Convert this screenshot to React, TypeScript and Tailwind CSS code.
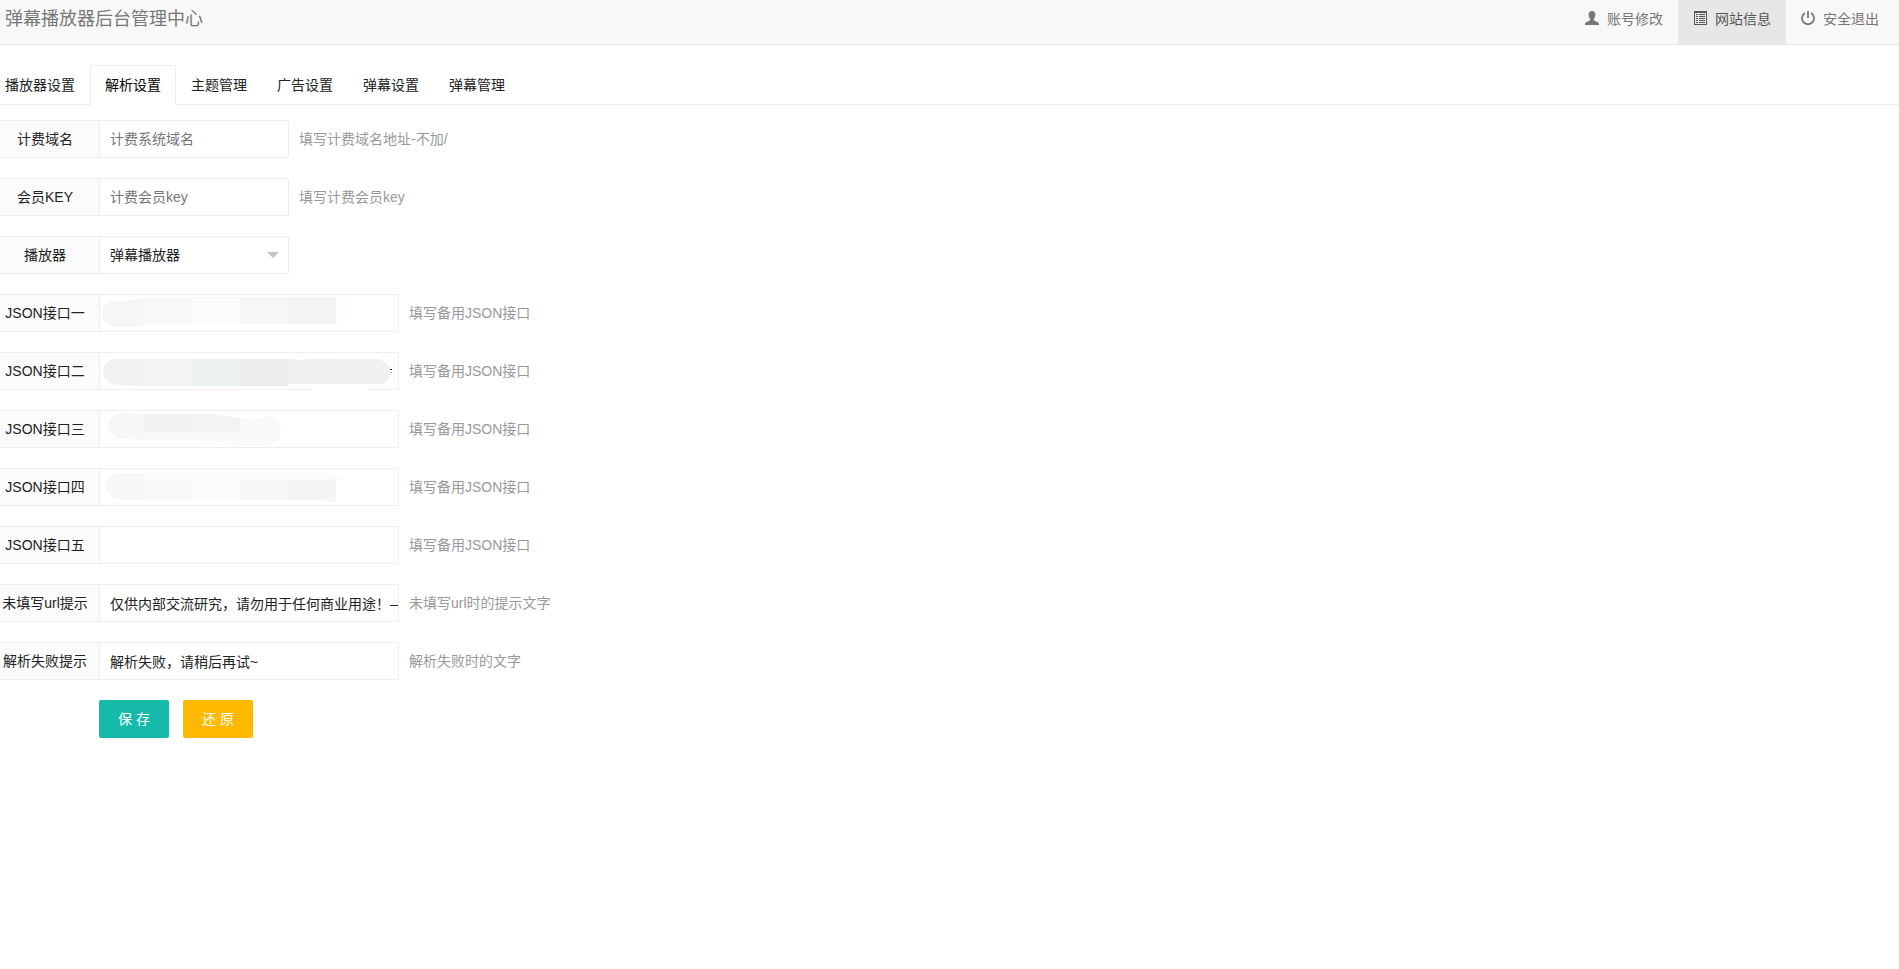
import { useState } from 'react'

type Smudge = { d: string; fill: string }[]

type Row = {
  id: string
  label: string
  hint?: string
  wide?: boolean
  placeholder?: string
  value?: string
  smudge?: Smudge
}

const navItems = [
  { id: 'account', label: '账号修改' },
  { id: 'site', label: '网站信息' },
  { id: 'logout', label: '安全退出' },
]

const tabs = ['播放器设置', '解析设置', '主题管理', '广告设置', '弹幕设置', '弹幕管理']

const topRows: Row[] = [
  { id: 'domain', label: '计费域名', placeholder: '计费系统域名', hint: '填写计费域名地址-不加/' },
  { id: 'key', label: '会员KEY', placeholder: '计费会员key', hint: '填写计费会员key' },
]

// masks over the private addresses, in the field's own 300x38 box
const smudges: Record<string, Smudge> = {
  json1: [
    { d: 'M17 7C8 7 3 13 3 20S8 33 20 33H34L45 31V4L34 6Z', fill: '#f7f5f6' },
    { d: 'M45 3H93V30H45Z', fill: '#f9f8f7' },
    { d: 'M93 3H141V30H93Z', fill: '#fbfbfb' },
    { d: 'M141 3H189V30H141Z', fill: '#f5f7f6' },
    { d: 'M189 3H237V30H189Z', fill: '#f4f4f4' },
    { d: 'M237 3C248 4 253 9 253 17S247 29 237 30Z', fill: '#fdfdfd' },
  ],
  json2: [
    { d: 'M45 7H18C9 7 4 13 4 20S10 32 18 33L45 34Z', fill: '#f3f2f1' },
    { d: 'M45 7H93V34H45Z', fill: '#f3f3f3' },
    { d: 'M93 7H141V34H93Z', fill: '#ebf0f1' },
    { d: 'M141 7H189V34H141Z', fill: '#ececee' },
    { d: 'M189 7H195V8H207V7H237V32H189Z', fill: '#efefee' },
    { d: 'M237 7H279C286 9 291 14 291 20S287 31 282 32H237Z', fill: '#f1eff0' },
    { d: 'M212 37H270V38H212Z', fill: '#fff' },
    { d: 'M291 17H293V18H291Z', fill: '#222' },
    { d: 'M292 20H293V21H292Z', fill: '#8fb8d8' },
  ],
  json3: [
    { d: 'M45 4L24 3C15 4 9 9 9 16S16 29 28 29L45 30Z', fill: '#f8f6f7' },
    { d: 'M45 4H93V22H45Z', fill: '#f3f1f2' },
    { d: 'M93 4H114L141 8V22H93Z', fill: '#f3f3f5' },
    { d: 'M45 22H141V8L150 9H156L168 7C177 8 182 13 182 20S176 35 165 36H145L120 32L100 30H45Z', fill: '#f9f9f9' },
  ],
  json4: [
    { d: 'M45 5H25C13 5 6 11 6 18S14 32 26 32H45Z', fill: '#f8f7f7' },
    { d: 'M45 5H228L248 12H45Z', fill: '#fafafa' },
    { d: 'M45 12H93V32H45Z', fill: '#f9f8f7' },
    { d: 'M93 12H141V32H93Z', fill: '#fcfcfc' },
    { d: 'M141 12H189V32H141Z', fill: '#f6f7f7' },
    { d: 'M189 12H237V34H228L225 32H189Z', fill: '#f5f5f5' },
  ],
}

const bottomRows: Row[] = [
  { id: 'json1', label: 'JSON接口一', hint: '填写备用JSON接口', wide: true, smudge: smudges.json1 },
  { id: 'json2', label: 'JSON接口二', hint: '填写备用JSON接口', wide: true, smudge: smudges.json2 },
  { id: 'json3', label: 'JSON接口三', hint: '填写备用JSON接口', wide: true, smudge: smudges.json3 },
  { id: 'json4', label: 'JSON接口四', hint: '填写备用JSON接口', wide: true, smudge: smudges.json4 },
  { id: 'json5', label: 'JSON接口五', hint: '填写备用JSON接口', wide: true },
  { id: 'empty', label: '未填写url提示', hint: '未填写url时的提示文字', wide: true, value: '仅供内部交流研究，请勿用于任何商业用途！——' },
  { id: 'fail', label: '解析失败提示', hint: '解析失败时的文字', wide: true, value: '解析失败，请稍后再试~' },
]

const labelClass = 'w-[110px] h-[38px] shrink-0 border border-[#eee] rounded-l-xs bg-[#fbfbfb] text-center leading-9 whitespace-nowrap'
const fieldClass = 'block w-full h-[38px] pl-[10px] border border-[#eee] rounded-r-xs bg-white text-[#222] outline-none placeholder:text-[#757575]'

function NavIcon({ id }: { id: string }) {
  if (id === 'account') {
    return (
      <svg width="14" height="14" viewBox="0 0 14 14" fill="currentColor" aria-hidden="true">
        <path d="M7 0C5 0 3.6 1.3 3.6 3.4c0 1.3.3 2.6.9 3.5.3.5.7.9.7 1.5 0 .9-.5 1.3-1.4 1.7L1.2 11.2C.4 11.6 0 12 0 13v1h14v-1c0-1-.4-1.4-1.2-1.8l-2.6-1.1c-.9-.4-1.4-.8-1.4-1.7 0-.6.4-1 .7-1.5.6-.9.9-2.2.9-3.5C10.4 1.3 9 0 7 0Z" />
      </svg>
    )
  }
  if (id === 'site') {
    return (
      <svg width="14" height="14" viewBox="0 0 14 14" fill="currentColor" aria-hidden="true">
        <path fillRule="evenodd" d="M1 0H14V14H1ZM2 2V13H13V2Z" />
        <path d="M3 3h2v1H3zM6 3h6v1H6zM3 5h2v1H3zM6 5h6v1H6zM3 7h2v1H3zM6 7h6v1H6zM3 9h2v1H3zM6 9h6v1H6zM3 11h2v1H3zM6 11h6v1H6z" />
      </svg>
    )
  }
  return (
    <svg width="14" height="14" viewBox="0 0 14 14" fill="none" stroke="currentColor" strokeWidth="1.8" aria-hidden="true">
      <path d="M4 2A6 6 0 1 0 10 2M7 0V7" />
    </svg>
  )
}

function FieldRow({ row }: { row: Row }) {
  return (
    <div className="flex items-start">
      <label htmlFor={row.id} className={labelClass}>{row.label}</label>
      <div className={`relative -ml-px shrink-0 ${row.wide ? 'w-[300px]' : 'w-[190px]'}`}>
        <input id={row.id} type="text" defaultValue={row.value} placeholder={row.placeholder} className={fieldClass} />
        {row.smudge && (
          <svg className="absolute inset-0 pointer-events-none" width="300" height="38" aria-hidden="true">
            {row.smudge.map((s) => <path key={s.d} d={s.d} fill={s.fill} />)}
          </svg>
        )}
      </div>
      {row.hint && <span className="ml-[10px] leading-[38px] text-[#999] whitespace-nowrap">{row.hint}</span>}
    </div>
  )
}

export default function App() {
  const [activeTab, setActiveTab] = useState('解析设置')

  return (
    <div className="min-h-screen overflow-x-hidden bg-white text-sm text-[#222] font-['Liberation_Sans','Noto_Sans_CJK_SC',sans-serif]">
      <header className="flex justify-between h-[45px] pr-[5px] bg-[#f8f8f8] border-b border-[#e7e7e7] text-[#777]">
        <h1 className="pl-[5px] text-lg leading-[38px]">弹幕播放器后台管理中心</h1>
        <nav className="flex">
          {navItems.map(({ id, label }) => (
            <a
              key={id}
              href={`#${id}`}
              className={`flex items-start gap-2 px-[15px] pt-2 ${id === 'site' ? 'bg-[#e7e7e7] text-[#555]' : ''}`}
            >
              <span className="pt-[3px]"><NavIcon id={id} /></span>
              <span className="leading-[22px]">{label}</span>
            </a>
          ))}
        </nav>
      </header>

      <main className="-ml-[10px] pt-5">
        <div role="tablist" className="flex h-10 border-b border-[#eee]">
          {tabs.map((tab) => (
            <button
              key={tab}
              type="button"
              role="tab"
              aria-selected={tab === activeTab}
              onClick={() => setActiveTab(tab)}
              className={`h-10 px-[14px] border rounded-t-xs ${
                tab === activeTab ? 'border-[#eee] border-b-white bg-white text-black' : 'border-transparent'
              }`}
            >
              {tab}
            </button>
          ))}
        </div>

        <form className="flex flex-col gap-5 pt-[15px]" onSubmit={(e) => e.preventDefault()}>
          {topRows.map((row) => <FieldRow key={row.id} row={row} />)}

          <div className="flex items-start">
            <label htmlFor="player" className={labelClass}>播放器</label>
            <div className="relative -ml-px w-[190px]">
              <select id="player" className={`${fieldClass} appearance-none`}>
                <option>弹幕播放器</option>
              </select>
              <svg className="absolute right-[10px] top-4 pointer-events-none" width="12" height="6" viewBox="0 0 12 6" fill="#c2c2c2" aria-hidden="true">
                <path d="M0 0H12L6 6Z" />
              </svg>
            </div>
          </div>

          {bottomRows.map((row) => <FieldRow key={row.id} row={row} />)}

          <div className="flex gap-[14px] pl-[109px] text-white">
            <button type="submit" className="w-[70px] h-[38px] rounded-xs bg-[#16baaa]">保 存</button>
            <button type="reset" className="w-[70px] h-[38px] rounded-xs bg-[#ffb800]">还 原</button>
          </div>
        </form>
      </main>
    </div>
  )
}
